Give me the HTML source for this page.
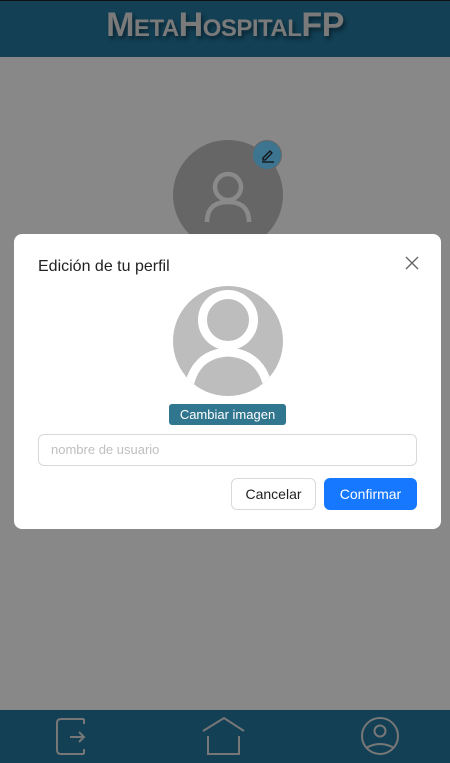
<!DOCTYPE html>
<html><head><style>
*{margin:0;padding:0;box-sizing:border-box}
html,body{width:450px;height:763px;overflow:hidden}
body{background:#888;position:relative;font-family:"Liberation Sans",sans-serif}
.hdr{position:absolute;left:0;top:0;width:450px;height:57px;background:#134055;border-top:1px solid #111}
.hdr h1{text-align:center;font-variant:small-caps;font-weight:bold;font-size:34px;color:#7a7a7a;line-height:48px;letter-spacing:-0.5px;text-shadow:2px 3px 4px rgba(0,0,0,.45)}
.ftr{position:absolute;left:0;top:710px;width:450px;height:53px;background:#134055}
.bgav{position:absolute;left:173px;top:140px;width:110px;height:110px;border-radius:50%;background:#666;overflow:hidden}
.edit{position:absolute;left:252px;top:140px;width:30px;height:30px;border-radius:50%;background:#3d7591;border:1px solid #666}
.modal{position:absolute;left:14px;top:234px;width:427px;height:295px;background:#fff;border-radius:8px}
.title{position:absolute;left:24px;top:24px;font-size:16px;color:#222}
.av{position:absolute;left:159px;top:52px;width:110px;height:110px;border-radius:50%;background:#bdbdbd;overflow:hidden}
.cb{position:absolute;left:155px;top:170px;width:117px;height:21px;background:#31768f;color:#fff;border-radius:3px;font-size:13px;text-align:center;line-height:21px}
.inp{position:absolute;left:24px;top:200px;width:379px;height:32px;border:1px solid #d9d9d9;border-radius:6px;font-size:13px;color:#bfbfbf;padding-left:12px;line-height:30px}
.bc{position:absolute;left:217px;top:244px;width:85px;height:32px;border:1px solid #d9d9d9;border-radius:6px;font-size:14px;color:#222;text-align:center;line-height:30px}
.bo{position:absolute;left:310px;top:244px;width:93px;height:32px;background:#1677ff;border-radius:6px;font-size:14px;color:#fff;text-align:center;line-height:32px}
</style></head><body>
<div class="hdr"><h1>MetaHospitalFP</h1></div>
<div class="bgav"><svg width="110" height="110" viewBox="0 0 110 110"><circle cx="55" cy="47" r="13" fill="none" stroke="#8a8a8a" stroke-width="4.5"/><path d="M34 82 Q34 62 55 62 Q76 62 76 82" fill="none" stroke="#8a8a8a" stroke-width="4.5"/></svg></div>
<div class="edit"><svg width="28" height="28" viewBox="0 0 28 28"><path d="M10 17 L17 10 L19 12 L12 19 L10 19 Z" fill="none" stroke="#111" stroke-width="1.3"/><line x1="9" y1="21" x2="21" y2="21" stroke="#111" stroke-width="1.3"/></svg></div>
<div class="ftr"><svg width="450" height="53" viewBox="0 0 450 53">
<g fill="none" stroke="#777" stroke-width="2">
<path d="M84 9 H61 Q57 9 57 13 V40 Q57 44 61 44 H84"/><path d="M84 9 V14 M84 39 V44"/><path d="M70 27 H84 M79 22 L84 27 L79 32"/>
<path d="M203 21 L224 8 L244 21"/><path d="M208 26 V44 H239 V26"/>
<circle cx="380" cy="26" r="18"/><circle cx="380" cy="21" r="5.5"/><path d="M366 38 Q380 30 394 38"/>
</g></svg></div>
<div class="modal">
<div class="title">Edición de tu perfil</div>
<svg style="position:absolute;left:391px;top:22px" width="14" height="14"><path d="M1 1 L13 13 M13 1 L1 13" stroke="#666" stroke-width="1.4"/></svg>
<div class="av"><svg width="110" height="110" viewBox="0 0 110 110"><circle cx="55" cy="34" r="25.5" fill="#bdbdbd" stroke="#fff" stroke-width="9"/><path d="M15 106 Q20 68 55 66 Q90 68 96 106" fill="#bdbdbd" stroke="#fff" stroke-width="9"/></svg></div>
<div class="cb">Cambiar imagen</div>
<div class="inp">nombre de usuario</div>
<div class="bc">Cancelar</div>
<div class="bo">Confirmar</div>
</div>
</body></html>
